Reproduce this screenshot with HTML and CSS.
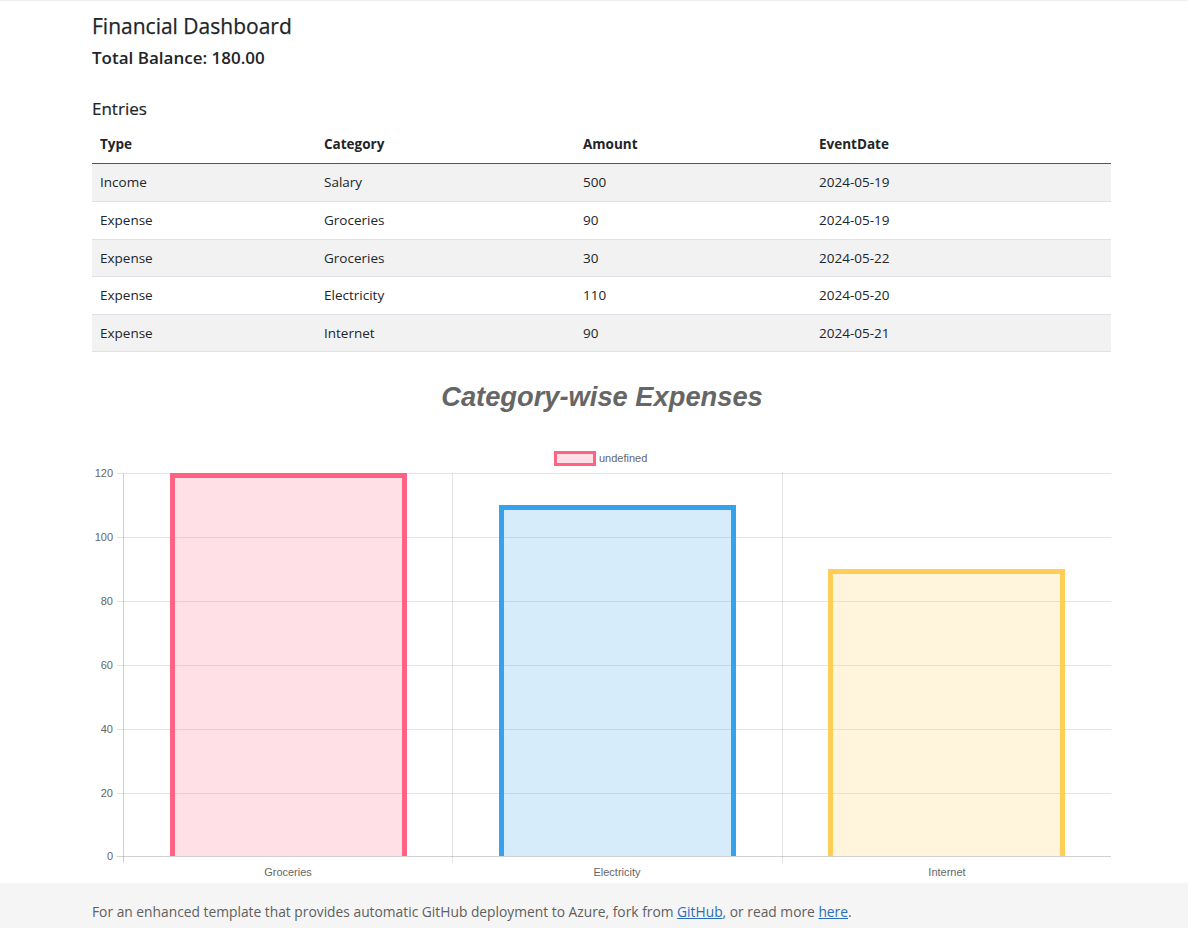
FILE: index.html
```html
<!DOCTYPE html>
<html>
<head>
<meta charset="utf-8">
<title>Financial Dashboard</title>
<link rel="stylesheet" href="styles.css">
</head>
<body>
<main class="page">
  <h1 class="title">Financial Dashboard</h1>
  <h2 class="balance">Total Balance: 180.00</h2>
  <h3 class="section">Entries</h3>
  <table class="entries">
    <colgroup>
      <col class="c1"><col class="c2"><col class="c3"><col class="c4">
    </colgroup>
    <thead>
      <tr><th>Type</th><th>Category</th><th>Amount</th><th>EventDate</th></tr>
    </thead>
    <tbody>
      <tr><td>Income</td><td>Salary</td><td>500</td><td>2024-05-19</td></tr>
      <tr><td>Expense</td><td>Groceries</td><td>90</td><td>2024-05-19</td></tr>
      <tr><td>Expense</td><td>Groceries</td><td>30</td><td>2024-05-22</td></tr>
      <tr><td>Expense</td><td>Electricity</td><td>110</td><td>2024-05-20</td></tr>
      <tr><td>Expense</td><td>Internet</td><td>90</td><td>2024-05-21</td></tr>
    </tbody>
  </table>
  <div class="chart">
    <svg class="chart-svg" width="1019" height="518" viewBox="92 365 1019 518" xmlns="http://www.w3.org/2000/svg">
      <text class="chart-title" x="602" y="406" text-anchor="middle">Category-wise Expenses</text>
      <!-- legend -->
      <rect x="555.5" y="452.5" width="39" height="12" fill="rgba(255,99,132,0.2)" stroke="rgb(255,99,132)" stroke-width="3"/>
      <text class="tick" x="599" y="462">undefined</text>
      <!-- grid -->
      <g stroke="rgba(0,0,0,0.1)" stroke-width="1">
        <line x1="117" y1="473.5" x2="1111" y2="473.5"/>
        <line x1="117" y1="537.5" x2="1111" y2="537.5"/>
        <line x1="117" y1="601.5" x2="1111" y2="601.5"/>
        <line x1="117" y1="665.5" x2="1111" y2="665.5"/>
        <line x1="117" y1="729.5" x2="1111" y2="729.5"/>
        <line x1="117" y1="793.5" x2="1111" y2="793.5"/>
        <line x1="452.5" y1="473" x2="452.5" y2="863"/>
        <line x1="782.5" y1="473" x2="782.5" y2="863"/>
      </g>
      <g stroke="rgba(0,0,0,0.18)" stroke-width="1">
        <line x1="117" y1="856.5" x2="1111" y2="856.5"/>
        <line x1="123.5" y1="473" x2="123.5" y2="863"/>
      </g>
      <!-- y labels -->
      <g class="tick" text-anchor="end">
        <text x="113" y="477">120</text>
        <text x="113" y="541">100</text>
        <text x="113" y="605">80</text>
        <text x="113" y="669">60</text>
        <text x="113" y="733">40</text>
        <text x="113" y="797">20</text>
        <text x="113" y="860">0</text>
      </g>
      <!-- bars -->
      <rect x="170" y="473" width="237" height="383" fill="rgba(255,99,132,0.2)"/>
      <path d="M172.5 856 V475.5 H404.5 V856" fill="none" stroke="rgb(255,99,132)" stroke-width="5"/>
      <rect x="499" y="505" width="237" height="351" fill="rgba(54,162,235,0.2)"/>
      <path d="M501.5 856 V507.5 H733.5 V856" fill="none" stroke="rgb(54,162,235)" stroke-width="5"/>
      <rect x="828" y="569" width="237" height="287" fill="rgba(255,206,86,0.2)"/>
      <path d="M830.5 856 V571.5 H1062.5 V856" fill="none" stroke="rgb(255,206,86)" stroke-width="5"/>
      <!-- x labels -->
      <g class="tick" text-anchor="middle">
        <text x="288" y="876">Groceries</text>
        <text x="617" y="876">Electricity</text>
        <text x="947" y="876">Internet</text>
      </g>
    </svg>
  </div>
</main>
<footer class="footer">
  For an enhanced template that provides automatic GitHub deployment to Azure, fork from <a href="#">GitHub</a>, or read more <a href="#">here</a>.
</footer>
</body>
</html>
```
FILE: styles.css
```css
html, body {
  margin: 0;
  padding: 0;
  background: #fff;
}
body {
  font-family: "Open Sans", "Noto Sans", sans-serif;
  color: #212529;
  border-top: 1px solid #eee;
}
.page {
  width: 1019px;
  margin-left: 92px;
  padding-top: 9px;
}
.title {
  margin: 0;
  font-size: 21px;
  font-weight: 500;
  line-height: 32px;
  -webkit-text-stroke: 0.25px #212529;
}
.balance {
  margin: 4px 0 0;
  font-size: 17px;
  font-weight: 600;
  line-height: 24px;
}
.section {
  margin: 27px 0 0;
  font-size: 17px;
  font-weight: 500;
  line-height: 24px;
  -webkit-text-stroke: 0.2px #212529;
}
.entries {
  margin-top: 5px;
  width: 1019px;
  border-collapse: collapse;
  table-layout: fixed;
  font-size: 13.5px;
}
.c1 { width: 224px; }
.c2 { width: 259px; }
.c3 { width: 236px; }
.c4 { width: 300px; }
.entries th {
  text-align: left;
  font-weight: 700;
  padding: 8px;
  line-height: 21px;
  border-bottom: 1.5px solid #555;
}
.entries td {
  padding: 8px;
  line-height: 20.5px;
  border-top: 1px solid #dee2e6;
}
.entries tbody tr:first-child td {
  border-top: none;
  line-height: 21px;
}
.entries tbody tr:last-child td {
  border-bottom: 1px solid #dee2e6;
}
.entries tbody tr:nth-child(odd) td {
  background: #f2f2f2;
}
.chart {
  margin-top: 13px;
}
.chart-svg {
  display: block;
}
.chart-title {
  font-family: "Liberation Sans", Arial, sans-serif;
  font-size: 27.3px;
  font-weight: 700;
  font-style: italic;
  fill: #666;
}
.tick {
  font-family: "Liberation Sans", Arial, sans-serif;
  font-size: 11px;
  fill: #666;
}
.footer {
  background: #f5f5f5;
  color: #5f5f5f;
  font-size: 13.8px;
  line-height: 20px;
  padding: 19px 92px 20px;
}
.footer a {
  color: #2a6ebb;
  text-decoration: underline;
}
```
